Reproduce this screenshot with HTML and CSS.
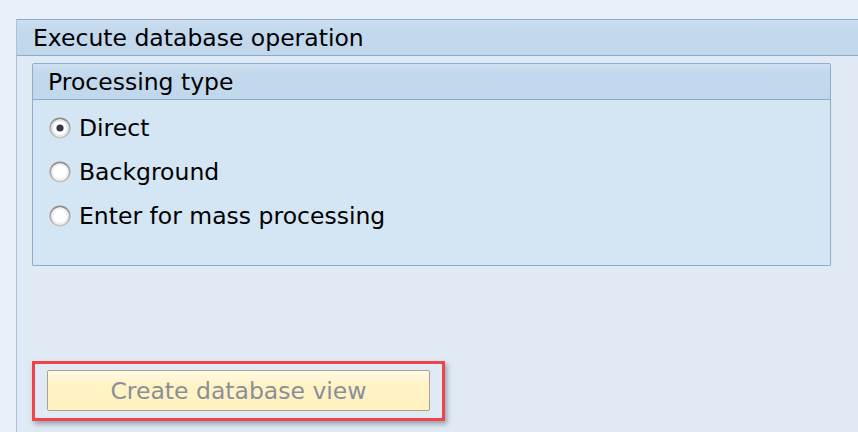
FILE: index.html
```html
<!DOCTYPE html>
<html>
<head>
<meta charset="utf-8">
<link rel="stylesheet" href="styles.css">
</head>
<body>
<div class="screen">
  <div class="topstrip"></div>
  <div class="main">
    <div class="gutter"></div>
    <div class="group">
      <div class="group-header">Execute database operation</div>
      <div class="group-body">
        <div class="subgroup">
          <div class="subgroup-header">Processing type</div>
          <div class="subgroup-body">
            <div class="radio-row">
              <svg class="radio" width="22" height="22" viewBox="0 0 22 22">
                <defs>
                  <linearGradient id="rb" x1="0" y1="0" x2="0" y2="1">
                    <stop offset="0" stop-color="#8e8e8e"/>
                    <stop offset="1" stop-color="#c4c4c4"/>
                  </linearGradient>
                </defs>
                <circle cx="11" cy="11" r="9.7" fill="#fff" stroke="url(#rb)" stroke-width="1.8"/>
                <circle cx="11" cy="11" r="7.6" fill="none" stroke="#e2e2e2" stroke-width="1.2"/>
                <circle cx="11" cy="11" r="3.6" fill="#3a3a46"/>
              </svg>
              <span>Direct</span>
            </div>
            <div class="radio-row">
              <svg class="radio" width="22" height="22" viewBox="0 0 22 22">
                <circle cx="11" cy="11" r="9.7" fill="#fff" stroke="url(#rb)" stroke-width="1.8"/>
                <circle cx="11" cy="11" r="7.6" fill="none" stroke="#ececec" stroke-width="1.2"/>
              </svg>
              <span>Background</span>
            </div>
            <div class="radio-row">
              <svg class="radio" width="22" height="22" viewBox="0 0 22 22">
                <circle cx="11" cy="11" r="9.7" fill="#fff" stroke="url(#rb)" stroke-width="1.8"/>
                <circle cx="11" cy="11" r="7.6" fill="none" stroke="#ececec" stroke-width="1.2"/>
              </svg>
              <span>Enter for mass processing</span>
            </div>
          </div>
        </div>
        <div class="highlight">
          <button class="action" type="button">Create database view</button>
        </div>
      </div>
    </div>
  </div>
</div>
</body>
</html>
```

FILE: styles.css
```css
html, body {
  margin: 0;
  padding: 0;
}
body {
  width: 858px;
  height: 432px;
  overflow: hidden;
  background: #dfeaf4;
  font-family: "DejaVu Sans", sans-serif;
  font-size: 23.5px;
  color: #000;
}
.screen {
  display: flex;
  flex-direction: column;
  height: 432px;
}
.topstrip {
  height: 19px;
  background: #e9f0f7;
  flex: none;
}
.main {
  display: flex;
  flex: 1;
}
.gutter {
  width: 16px;
  background: #e9f0f7;
  flex: none;
}
.group {
  flex: 1;
  border-left: 1px solid #a9c1dc;
  display: flex;
  flex-direction: column;
}
.group-header {
  height: 35px;
  border-top: 1px solid #90a9c7;
  border-bottom: 1px solid #8ea8c6;
  background: linear-gradient(#cddff0, #c2d8ec 30%, #c1d7ec);
  padding-left: 16px;
  line-height: 36px;
  white-space: nowrap;
}
.group-body {
  padding: 7px 27px 0 15px;
}
.subgroup {
  border: 1px solid #8eaccc;
  border-radius: 2px 2px 0 0;
  background: #d4e5f3;
}
.subgroup-header {
  height: 35px;
  border-bottom: 1px solid #8ea8c6;
  background: linear-gradient(#cddff0, #c2d8ec 30%, #c1d7ec);
  padding-left: 15px;
  line-height: 36px;
}
.subgroup-body {
  padding: 6px 0 27px 16px;
}
.radio-row {
  height: 44px;
  display: flex;
  align-items: center;
  gap: 8px;
}
.radio {
  flex: none;
}
.highlight {
  margin-top: 95px;
  width: 383px;
  padding: 6px 12px 7px 12px;
  border: 3px solid #f0434a;
  box-shadow: 2px 3px 5px rgba(90, 100, 115, 0.55);
}
.action {
  display: block;
  width: 383px;
  height: 41px;
  border: 1px solid #aaa38a;
  border-radius: 2px;
  background: linear-gradient(#fffbe6, #fff3c6 35%, #fff1c0);
  color: #8a8f97;
  font-family: inherit;
  font-size: 23.5px;
  padding: 2px 0 0 0;
  line-height: 37px;
  text-align: center;
}
```
